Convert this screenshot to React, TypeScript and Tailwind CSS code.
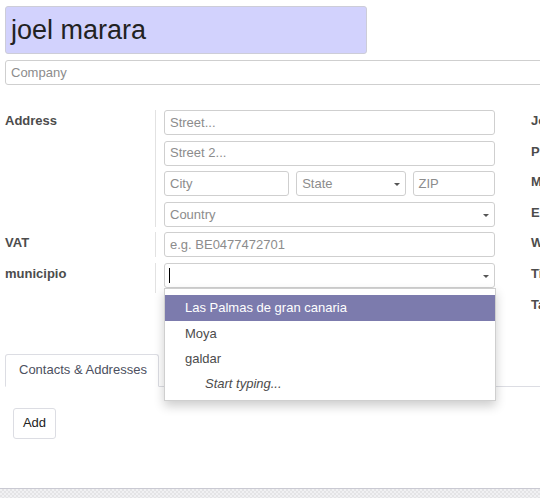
import { ReactNode } from "react";

const font = { fontFamily: '"Liberation Sans", Arial, sans-serif' };

function Field({ placeholder, select = false, className = "" }: { placeholder?: string; select?: boolean; className?: string }) {
  return (
    <div
      className={`relative h-[25px] border border-[#cfcfcf] rounded-[3px] bg-white flex items-center pl-[5px] text-[13px] text-[#8c8c8c] ${className}`}
    >
      {placeholder}
      {select && (
        <span className="absolute right-[5px] top-[11px] w-0 h-0 border-l-[3px] border-r-[3px] border-t-[3px] border-l-transparent border-r-transparent border-t-[#555]" />
      )}
    </div>
  );
}

function Row({ label, children }: { label?: string; children: ReactNode }) {
  return (
    <div className="flex">
      <div className="w-[150px] shrink-0 pt-[1px] text-[13px] font-bold text-[#4c4c4c]">{label}</div>
      <div className="w-[340px] shrink-0 border-l border-[#e2e2e2] pl-[8px] flex flex-col gap-[5.6px]">{children}</div>
    </div>
  );
}

const rightLabels = ["Job Position", "Phone", "Mobile", "Email", "Website", "Title", "Tags"];

export default function App() {
  return (
    <div className="w-[540px] h-[498px] overflow-hidden relative bg-white" style={font}>
      <div className="w-[700px] pl-[5px] pt-[6px]">
        {/* name + company */}
        <div className="w-[362px] h-[48px] bg-[#d2d2fd] border border-[#cdcdd8] rounded-[3px] flex items-center pl-[5px] text-[27px] text-[#222]">
          joel marara
        </div>
        <div className="mt-[6px] h-[25px] border border-[#cfcfcf] rounded-[3px] flex items-center pl-[5px] text-[13px] text-[#8c8c8c]">
          Company
        </div>

        {/* address group */}
        <div className="mt-[25px] flex">
          <div className="flex flex-col">
            <div className="flex flex-col gap-[5.6px]">
              <Row label="Address">
                <Field placeholder="Street..." />
                <Field placeholder="Street 2..." />
                <div className="flex gap-[7px]">
                  <Field placeholder="City" className="w-[126px]" />
                  <Field placeholder="State" select className="w-[110px]" />
                  <Field placeholder="ZIP" className="w-[83px]" />
                </div>
                <Field placeholder="Country" select />
              </Row>
              <Row label="VAT">
                <Field placeholder="e.g. BE0477472701" />
              </Row>
              <Row label="municipio">
                <div className="relative">
                  <Field select />
                  <span className="absolute left-[5px] top-[5px] w-[1px] h-[15px] bg-black" />
                </div>
              </Row>
            </div>
            <div className="ml-[150px] h-[5px] border-l border-[#e2e2e2]" />
          </div>
          <div className="ml-[36px] flex flex-col gap-[14.6px] pt-[3px]">
            {rightLabels.map((l) => (
              <div key={l} className="text-[13px] font-bold text-[#4c4c4c] leading-[16px]">
                {l}
              </div>
            ))}
          </div>
        </div>

        {/* tabs */}
        <div className="mt-[41px] flex border-b border-[#dcdde3]">
          <div className="w-[154px] h-[33px] -mb-px bg-white border border-b-white border-[#dcdde3] rounded-t-[3px] flex items-center pl-[13px] text-[13px] text-[#4c5060]">
            Contacts &amp; Addresses
          </div>
        </div>
        <div className="mt-[21px] ml-[8px] w-[43px] h-[31px] border border-[#dcdde3] rounded-[3px] flex items-center justify-center text-[13px] text-[#222]">
          Add
        </div>
      </div>

      {/* autocomplete dropdown */}
      <div className="absolute left-[164px] top-[288px] w-[332px] h-[113px] bg-white border border-[#cfcfcf] shadow-[0_5px_10px_rgba(0,0,0,0.2)] pt-[6px] text-[13px]">
        <div className="h-[26px] bg-[#7c7bad] text-white flex items-center pl-[20px]">Las Palmas de gran canaria</div>
        <div className="h-[25px] text-[#4c4c4c] flex items-center pl-[20px]">Moya</div>
        <div className="h-[25px] text-[#4c4c4c] flex items-center pl-[20px]">galdar</div>
        <div className="h-[26px] text-[#4c4c4c] italic flex items-center pl-[40px]">Start typing...</div>
      </div>

      {/* bottom strip */}
      <div className="absolute left-0 right-0 top-[488px] h-[10px] border-t border-[#c9c9d2] bg-[repeating-conic-gradient(#e4e4e6_0_25%,#f1f1f3_0_50%)] bg-[length:4px_4px]" />
    </div>
  );
}
